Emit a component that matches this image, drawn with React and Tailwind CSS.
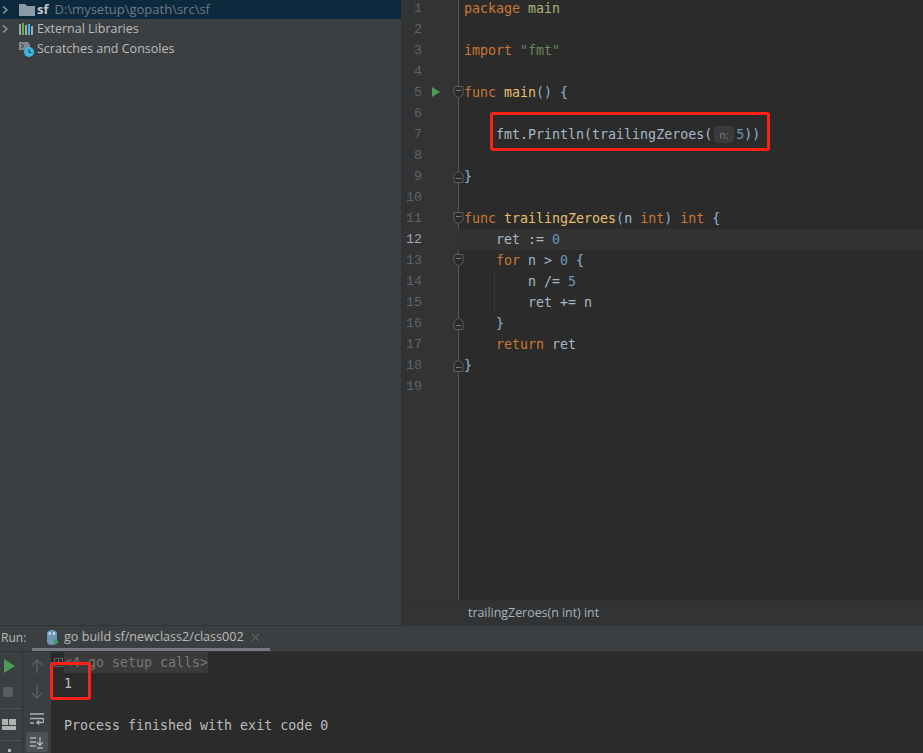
import React from "react";

const k = "text-[#cc7832]";
const f = "text-[#e8bf6a]";
const p = "text-[#8fb3d4]";
const t = "text-[#a9b7c6]";
const n = "text-[#6897bb]";

const Fold = ({ up, className }) => (
  <svg width="11" height="13" viewBox="0 0 11 13" className={className}>
    <path
      d={up ? "M1 12.5H10V4.5L5.5 1L1 4.5Z" : "M1 .5H10V8.5L5.5 12L1 8.5Z"}
      fill="#2b2b2b"
      stroke="#5b5d5f"
    />
    <path d={up ? "M3 8.5H8" : "M3 4.5H8"} stroke="#7a7c7e" />
  </svg>
);

const lines = [
  [[k, "package "], ["text-[#a6b578]", "main"]],
  [],
  [[k, "import "], ["text-[#6a8759]", '"fmt"']],
  [],
  [[k, "func "], [f, "main"], [p, "() {"]],
  [],
  "hint",
  [],
  [[p, "}"]],
  [],
  [[k, "func "], [f, "trailingZeroes"], [p, "("], [t, "n "], [k, "int"], [p, ") "], [k, "int "], [p, "{"]],
  [[t, "    ret := "], [n, "0"]],
  [[k, "    for "], [t, "n > "], [n, "0 "], [p, "{"]],
  [[t, "        n /= "], [n, "5"]],
  [[t, "        ret += n"]],
  [[p, "    }"]],
  [[k, "    return "], [t, "ret"]],
  [[p, "}"]],
  [],
];

const folds = { 5: false, 9: true, 11: false, 13: false, 16: true, 18: true };

function Tree() {
  return (
    <div className="w-[401px] shrink-0 bg-[#3c3f41] font-['Open_Sans',sans-serif] text-[12.5px] text-[#bbbbbb]">
      <div className="flex h-[19px] items-center bg-[#0d293e]">
        <svg width="10" height="10" viewBox="0 0 10 10">
          <path d="M3 1.5L7 5L3 8.5" fill="none" stroke="#9a9da0" strokeWidth="1.3" />
        </svg>
        <svg width="16" height="12" viewBox="0 0 16 12" className="ml-[9px]">
          <path d="M0 0H6L8 2H16V12H0Z" fill="#8a9ba8" />
        </svg>
        <span className="ml-[2px] text-[13px] font-bold text-[#c4c8cb]">sf</span>
        <span className="ml-[6px] text-[13px] text-[#6d7a83]">D:\mysetup\gopath\src\sf</span>
      </div>
      <div className="flex h-[20px] items-center">
        <svg width="10" height="10" viewBox="0 0 10 10">
          <path d="M3 1.5L7 5L3 8.5" fill="none" stroke="#9a9da0" strokeWidth="1.3" />
        </svg>
        <svg width="15" height="12" viewBox="0 0 15 12" className="ml-[9px]">
          <rect x="0" y="1" width="2" height="11" fill="#9aa7b0" />
          <rect x="3" y="0" width="2" height="12" fill="#62b543" />
          <rect x="6" y="2" width="2" height="10" fill="#9aa7b0" />
          <rect x="9" y="1" width="2" height="11" fill="#40b6e0" />
          <rect x="12" y="3" width="2" height="9" fill="#9aa7b0" />
        </svg>
        <span className="ml-[3px]">External Libraries</span>
      </div>
      <div className="flex h-[20px] items-center pl-[19px]">
        <svg width="15" height="15" viewBox="0 0 15 15">
          <path d="M0 0H9L11 3V8H0Z" fill="#7f8b91" />
          <path d="M2 2L5 4L2 6" fill="none" stroke="#3c3f41" />
          <circle cx="10" cy="10" r="5" fill="#40b6e0" />
          <path d="M10 7V10.5H12.5" fill="none" stroke="#1e3a4a" />
        </svg>
        <span className="ml-[3px]">Scratches and Consoles</span>
      </div>
    </div>
  );
}

function Editor() {
  return (
    <div className="flex min-w-0 flex-1 flex-col border-l border-[#323232] bg-[#2b2b2b]">
      <div className="relative flex-1 overflow-hidden">
        <div className="absolute top-0 bottom-0 left-0 w-[57px] border-r border-[#555555] bg-[#313335]" />
        <div className="absolute top-[271px] left-[92px] h-[42px] w-px bg-[#3b3b3b]" />
        <div className="relative -mt-[2px] font-['DejaVu_Sans_Mono',monospace] text-[13.3px] leading-[21px]">
          {lines.map((line, i) => {
            const num = i + 1;
            const current = num === 12;
            return (
              <div key={num} className={`flex h-[21px] ${current ? "bg-[#323232]" : ""}`}>
                <div className={`relative w-[57px] shrink-0 ${current ? "bg-[#313335]" : ""}`}>
                  <span className={`absolute right-[37px] font-['Liberation_Mono',monospace] text-[13.3px] ${current ? "text-[#a4a3a3]" : "text-[#606366]"}`}>
                    {num}
                  </span>
                  {num === 5 && (
                    <svg width="9" height="10" viewBox="0 0 9 10" className="absolute top-[5px] left-[29px]">
                      <path d="M1 0L9 5L1 10Z" fill="#499c54" />
                    </svg>
                  )}
                  {folds[num] !== undefined && (
                    <Fold up={folds[num]} className="absolute top-[4px] left-[51px]" />
                  )}
                </div>
                <div className="whitespace-pre pl-[5px]">
                  {line === "hint" ? (
                    <div className="flex">
                      <span className={t}>{"    fmt.Println(trailingZeroes("}</span>
                      <span className="mx-[2px] mt-[2px] flex h-[17px] w-[20px] items-center justify-center rounded-[4px] bg-[#3a3b3c] font-['Open_Sans',sans-serif] text-[11px] leading-none text-[#787878]">
                        n:
                      </span>
                      <span className={n}>5</span>
                      <span className={p}>))</span>
                    </div>
                  ) : (
                    line.map(([c, s], j) => (
                      <span key={j} className={c}>{s}</span>
                    ))
                  )}
                </div>
              </div>
            );
          })}
        </div>
      </div>
      <div className="flex h-[25px] shrink-0 items-center border-t border-[#323232] bg-[#313335] pl-[66px] font-['Open_Sans',sans-serif] text-[12.4px] text-[#a9b4bd]">
        trailingZeroes(n int) int
      </div>
    </div>
  );
}

function RunPanel() {
  return (
    <div className="flex min-h-0 flex-1 flex-col border-t border-[#323232] bg-[#3c3f41]">
      <div className="flex h-[26px] shrink-0 border-b border-[#323232]">
        <span className="ml-[1px] mt-[3px] w-[27px] font-['Open_Sans',sans-serif] text-[12px] text-[#bbbbbb]">Run:</span>
        <div className="ml-[4px] flex w-[238px] items-center border-b-[3px] border-[#747a80] pl-[14px] font-['Open_Sans',sans-serif] text-[12.6px] text-[#bbbbbb]">
          <svg width="13" height="15" viewBox="0 0 13 15">
            <path d="M1 4C1 1 3.5 0 6 0S11 1 11 4V12C11 14 8.5 15 6 15S1 14 1 12Z" fill="#6a9ab8" />
            <circle cx="3.8" cy="3.5" r="1.2" fill="#d8e4ea" />
            <circle cx="8" cy="3.5" r="1.2" fill="#d8e4ea" />
            <path d="M8 9L13 12L8 15Z" fill="#499c54" />
          </svg>
          <span className="ml-[5px]">go build sf/newclass2/class002</span>
          <svg width="9" height="9" viewBox="0 0 9 9" className="ml-[7px]">
            <path d="M1 1L8 8M8 1L1 8" stroke="#6e7274" strokeWidth="1" />
          </svg>
        </div>
      </div>
      <div className="flex min-h-0 flex-1">
        <div className="flex w-[23px] shrink-0 flex-col border-r border-[#323232] pt-[7px]">
          <svg width="12" height="14" viewBox="0 0 12 14" className="ml-[3px]">
            <path d="M1 0L12 7L1 14Z" fill="#499c54" />
          </svg>
          <div className="ml-[3px] mt-[14px] h-[10px] w-[10px] bg-[#5a5d5f]" />
          <div className="mt-[11px] h-px w-full bg-[#515151]" />
          <svg width="14" height="12" viewBox="0 0 14 12" className="ml-[2px] mt-[10px]">
            <rect x="0" y="0" width="6" height="6" fill="#afb1b3" />
            <rect x="7" y="0" width="7" height="6" fill="#afb1b3" />
            <rect x="0" y="7" width="14" height="4" fill="#afb1b3" />
          </svg>
          <div className="mt-[9px] h-px w-full bg-[#515151]" />
          <div className="ml-[8px] mt-[8px] h-[3px] w-[3px] bg-[#afb1b3]" />
        </div>
        <div className="flex w-[28px] shrink-0 flex-col items-center pt-[7px]">
          <svg width="12" height="14" viewBox="0 0 12 14">
            <path d="M6 14V1M1 6L6 1L11 6" fill="none" stroke="#5a5d5f" strokeWidth="1.5" />
          </svg>
          <svg width="12" height="14" viewBox="0 0 12 14" className="mt-[12px]">
            <path d="M6 0V13M1 8L6 13L11 8" fill="none" stroke="#5a5d5f" strokeWidth="1.5" />
          </svg>
          <svg width="14" height="13" viewBox="0 0 14 13" className="mt-[14px]">
            <path d="M0 1H14M0 5.5H12C14.5 5.5 14.5 9.5 12 9.5H7M9 7.5L7 9.5L9 11.5M0 10H4" fill="none" stroke="#afb1b3" strokeWidth="1.5" />
          </svg>
          <div className="mt-[6px] flex h-[20px] w-[22px] items-start justify-center rounded-[3px] bg-[#4e5254] pt-[5px]">
            <svg width="14" height="12" viewBox="0 0 14 12">
              <path d="M0 1H6M0 5H6M0 9H6M10 0V8M7 5L10 8.5L13 5M7 11H13" fill="none" stroke="#afb1b3" strokeWidth="1.3" />
            </svg>
          </div>
        </div>
        <div className="relative flex-1 bg-[#2b2b2b] pl-[13px] font-['DejaVu_Sans_Mono',monospace] text-[13.3px] leading-[21px] text-[#bbbbbb]">
          <svg width="9" height="9" viewBox="0 0 9 9" className="absolute top-[6px] left-[3px]">
            <rect x=".5" y=".5" width="8" height="8" fill="none" stroke="#5b5d5f" />
            <path d="M2 4.5H7M4.5 2V7" stroke="#7a7c7e" />
          </svg>
          <div className="h-[21px] w-[144px] whitespace-pre bg-[#3a3a3a] text-[#787878]">{"<4 go setup calls>"}</div>
          <div className="h-[21px]">1</div>
          <div className="h-[21px]" />
          <div className="h-[21px] whitespace-pre">Process finished with exit code 0</div>
        </div>
      </div>
    </div>
  );
}

export default function App() {
  return (
    <div className="relative flex h-[753px] w-[923px] flex-col overflow-hidden bg-[#3c3f41]">
      <div className="flex h-[625px] shrink-0">
        <Tree />
        <Editor />
      </div>
      <RunPanel />
      <div className="pointer-events-none absolute top-[112px] left-[490px] h-[39px] w-[280px] rounded-[3px] border-[3px] border-[#ff2016]" />
      <div className="pointer-events-none absolute top-[662px] left-[50px] h-[38px] w-[41px] rounded-[3px] border-[3px] border-[#ff2016]" />
    </div>
  );
}
